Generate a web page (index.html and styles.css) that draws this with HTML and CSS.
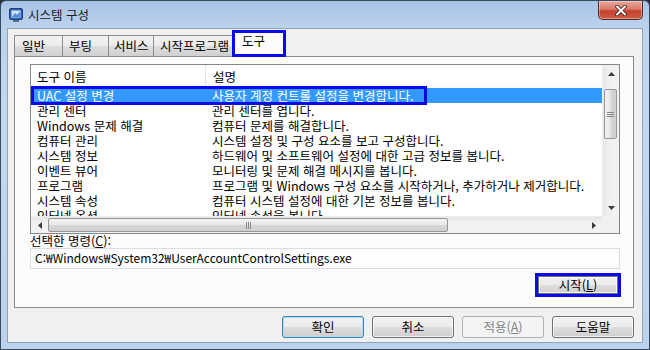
FILE: index.html
```html
<!DOCTYPE html>
<html lang="ko">
<head>
<meta charset="utf-8">
<title>시스템 구성</title>
<link rel="stylesheet" href="styles.css">
</head>
<body>
<div class="window">
  <div class="titlebar">
    <svg class="app-icon" width="14" height="14" viewBox="0 0 14 14">
      <rect x="0.5" y="0.5" width="13" height="11" rx="1.5" fill="#2f64b8" stroke="#1d3f7a"/>
      <rect x="2.5" y="2.5" width="9" height="7" fill="#cfe3fb"/>
      <path d="M3 9 L6 5 L8 7 L11 3.5 L11 9 Z" fill="#4f8ee0"/>
      <rect x="4" y="12" width="6" height="2" fill="#5a6f8c"/>
    </svg>
    <span class="title">시스템 구성</span>
    <div class="close">
      <svg width="14" height="11" viewBox="0 0 14 11">
        <path d="M3 1.5 L11 9.5 M11 1.5 L3 9.5" stroke="#4a1a12" stroke-width="3.6" stroke-linecap="round"/>
        <path d="M3 1.5 L11 9.5 M11 1.5 L3 9.5" stroke="#ffffff" stroke-width="2" stroke-linecap="round"/>
      </svg>
    </div>
  </div>
  <div class="client">
    <div class="tabs">
      <div class="tab tab-general">일반</div>
      <div class="tab tab-boot">부팅</div>
      <div class="tab tab-services">서비스</div>
      <div class="tab tab-startup">시작프로그램</div>
      <div class="tab tab-active">도구</div>
    </div>
    <div class="panel">
      <div class="listbox">
        <div class="list-content">
          <div class="list-header">
            <div class="col1">도구 이름</div>
            <div class="col2">설명</div>
          </div>
          <div class="row selected"><div class="col1">UAC 설정 변경</div><div class="col2">사용자 계정 컨트롤 설정을 변경합니다.</div></div>
          <div class="row"><div class="col1">관리 센터</div><div class="col2">관리 센터를 엽니다.</div></div>
          <div class="row"><div class="col1">Windows 문제 해결</div><div class="col2">컴퓨터 문제를 해결합니다.</div></div>
          <div class="row"><div class="col1">컴퓨터 관리</div><div class="col2">시스템 설정 및 구성 요소를 보고 구성합니다.</div></div>
          <div class="row"><div class="col1">시스템 정보</div><div class="col2">하드웨어 및 소프트웨어 설정에 대한 고급 정보를 봅니다.</div></div>
          <div class="row"><div class="col1">이벤트 뷰어</div><div class="col2">모니터링 및 문제 해결 메시지를 봅니다.</div></div>
          <div class="row"><div class="col1">프로그램</div><div class="col2">프로그램 및 Windows 구성 요소를 시작하거나, 추가하거나 제거합니다.</div></div>
          <div class="row"><div class="col1">시스템 속성</div><div class="col2">컴퓨터 시스템 설정에 대한 기본 정보를 봅니다.</div></div>
          <div class="row"><div class="col1">인터넷 옵션</div><div class="col2">인터넷 속성을 봅니다.</div></div>
        </div>
        <div class="vscroll">
          <div class="sb-btn">
            <svg width="7" height="4" viewBox="0 0 7 4"><path d="M0 4 L3.5 0 L7 4 Z" fill="#3a3a3a"/></svg>
          </div>
          <div class="v-track">
            <div class="v-thumb">
              <svg width="7" height="7" viewBox="0 0 7 7"><path d="M0 1.5 H7 M0 3.5 H7 M0 5.5 H7" stroke="#8a8a8a" stroke-width="1"/></svg>
            </div>
          </div>
          <div class="sb-btn">
            <svg width="7" height="4" viewBox="0 0 7 4"><path d="M0 0 L3.5 4 L7 0 Z" fill="#3a3a3a"/></svg>
          </div>
        </div>
        <div class="hscroll">
          <div class="sb-btn">
            <svg width="4" height="7" viewBox="0 0 4 7"><path d="M4 0 L0 3.5 L4 7 Z" fill="#3a3a3a"/></svg>
          </div>
          <div class="h-track">
            <div class="h-thumb">
              <svg width="7" height="7" viewBox="0 0 7 7"><path d="M1.5 0 V7 M3.5 0 V7 M5.5 0 V7" stroke="#8a8a8a" stroke-width="1"/></svg>
            </div>
          </div>
          <div class="sb-btn">
            <svg width="4" height="7" viewBox="0 0 4 7"><path d="M0 0 L4 3.5 L0 7 Z" fill="#3a3a3a"/></svg>
          </div>
        </div>
        <div class="corner"></div>
        <div class="mark-row"></div>
      </div>
      <div class="cmd-label">선택한 명령(<u>C</u>):</div>
      <div class="cmd-field">C:₩Windows₩System32₩UserAccountControlSettings.exe</div>
      <div class="run-row">
        <button class="btn btn-run">시작(<u>L</u>)</button>
      </div>
    </div>
    <div class="buttons">
      <button class="btn btn-default">확인</button>
      <button class="btn">취소</button>
      <button class="btn btn-disabled">적용(<u>A</u>)</button>
      <button class="btn">도움말</button>
    </div>
  </div>
</div>
</body>
</html>
```

FILE: styles.css
```css
html, body {
  margin: 0;
  padding: 0;
}

body {
  width: 650px;
  height: 350px;
  overflow: hidden;
  background: #2a2f38;
  font-family: "Noto Sans CJK KR", "Liberation Sans", sans-serif;
  font-size: 12.5px;
  color: #000;
}

.window {
  box-sizing: border-box;
  width: 650px;
  height: 350px;
  border: 1px solid #3a4a5e;
  border-radius: 6px 6px 0 0;
  background: linear-gradient(180deg, #a7c3e5 0px, #bcd3ee 28px, #c4d8ef 120px, #bcd2ec 100%);
  padding: 0 6px 6px 6px;
  display: flex;
  flex-direction: column;
}

.titlebar {
  height: 27px;
  display: flex;
  align-items: center;
}

.app-icon {
  margin-left: 2px;
  margin-top: 1px;
  flex: none;
}

.title {
  margin-left: 5px;
  font-size: 12.5px;
  color: #1b1b1b;
  line-height: 14px;
}

.close {
  margin-left: auto;
  align-self: flex-start;
  width: 45px;
  height: 19px;
  box-sizing: border-box;
  border: 1px solid #5b2b24;
  border-top: none;
  border-radius: 0 0 5px 5px;
  background: linear-gradient(180deg, #e9a99c 0%, #d8796a 45%, #c4412f 55%, #cf5b45 100%);
  box-shadow: inset 0 0 0 1px rgba(255, 255, 255, 0.35);
  display: flex;
  align-items: center;
  justify-content: center;
}

.client {
  flex: 1;
  border: 1px solid #8fa3bc;
  background: #f0f0f0;
  padding: 2px 8px 0 6px;
  display: flex;
  flex-direction: column;
}

/* tabs */
.tabs {
  height: 25px;
  display: flex;
  align-items: flex-end;
  position: relative;
  z-index: 2;
}

.tab {
  box-sizing: border-box;
  height: 21px;
  border: 1px solid #898c95;
  border-bottom: none;
  margin-left: -1px;
  padding-left: 6px;
  line-height: 19px;
  white-space: nowrap;
  background: linear-gradient(180deg, #f2f2f2 0%, #ebebeb 50%, #dddddd 51%, #d0d0d0 100%);
}

.tab-general { margin-left: 0; width: 49px; padding-left: 7px; }
.tab-boot { width: 47px; }
.tab-services { width: 46px; padding-left: 5px; }
.tab-startup { width: 80px; }

.tab-active {
  margin-left: -1px;
  margin-bottom: -1px;
  width: 54px;
  height: 27px;
  border: 3px solid #0a0ae8;
  padding-left: 7px;
  line-height: 15px;
  background: #fcfcfc;
}

.panel {
  box-sizing: border-box;
  height: 252px;
  border: 1px solid #898c95;
  background: #fcfcfc;
  padding: 7px 13px 0 15px;
  display: flex;
  flex-direction: column;
}

/* list view */
.listbox {
  position: relative;
  box-sizing: border-box;
  width: 590px;
  height: 170px;
  border: 1px solid #828790;
  background: #fff;
  display: grid;
  grid-template-columns: 1fr 17px;
  grid-template-rows: 1fr 17px;
}

.list-content {
  overflow: hidden;
  grid-column: 1;
  grid-row: 1;
}

.list-header {
  display: flex;
  height: 23px;
  line-height: 23px;
  background: linear-gradient(180deg, #ffffff 0%, #ffffff 60%, #f7f8f9 100%);
}

.list-header .col1 {
  border-right: 1px solid #e3e7ec;
  width: 168px;
}

.col1 {
  box-sizing: content-box;
  width: 168px;
  padding-left: 6px;
  flex: none;
  white-space: nowrap;
}

.col2 {
  padding-left: 7px;
  white-space: nowrap;
}

.row {
  display: flex;
  height: 15px;
  line-height: 15px;
}

.row.selected {
  background: #3399ff;
  color: #fff;
  margin-left: 1px;
}

.row.selected .col1 {
  padding-left: 5px;
}

.mark-row {
  position: absolute;
  left: 0;
  top: 21px;
  width: 396px;
  height: 19px;
  box-sizing: border-box;
  border: 3px solid #0a0ae8;
  pointer-events: none;
}

/* scrollbars */
.vscroll {
  grid-column: 2;
  grid-row: 1;
  display: flex;
  flex-direction: column;
  background: linear-gradient(90deg, #e6e6e6 0%, #f1f1f1 40%, #f3f3f3 100%);
  border-left: 1px solid #eeeeee;
}

.hscroll {
  grid-column: 1;
  grid-row: 2;
  display: flex;
  background: linear-gradient(180deg, #e6e6e6 0%, #f1f1f1 40%, #f3f3f3 100%);
  border-top: 1px solid #eeeeee;
}

.sb-btn {
  flex: none;
  width: 17px;
  height: 17px;
  display: flex;
  align-items: center;
  justify-content: center;
}

.vscroll .sb-btn {
  width: 16px;
}

.hscroll .sb-btn {
  height: 16px;
}

.v-track {
  flex: 1;
  padding-top: 7px;
}

.v-thumb {
  box-sizing: border-box;
  width: 13px;
  height: 50px;
  margin-left: 1px;
  border: 1px solid #979797;
  border-radius: 2px;
  background: linear-gradient(90deg, #f3f3f3 0%, #e8e8e8 45%, #d6d6d6 55%, #cfcfcf 100%);
  display: flex;
  align-items: center;
  justify-content: center;
}

.h-track {
  flex: 1;
  padding-top: 1px;
}

.h-thumb {
  box-sizing: border-box;
  width: 400px;
  height: 14px;
  border: 1px solid #979797;
  border-radius: 2px;
  background: linear-gradient(180deg, #f3f3f3 0%, #e8e8e8 45%, #d6d6d6 55%, #cfcfcf 100%);
  display: flex;
  align-items: center;
  justify-content: center;
}

.corner {
  grid-column: 2;
  grid-row: 2;
  background: #f0f0f0;
}

/* command */
.cmd-label {
  height: 14px;
  line-height: 14px;
  margin-top: 0;
}

.cmd-field {
  box-sizing: border-box;
  width: 590px;
  height: 21px;
  border: 1px solid #dadde2;
  background: #fdfdfd;
  padding-left: 4px;
  line-height: 18px;
  font-size: 12px;
  white-space: nowrap;
}

.run-row {
  display: flex;
  justify-content: flex-end;
  margin-top: 4px;
  margin-right: -1px;
}

/* buttons */
.btn {
  box-sizing: border-box;
  font-family: inherit;
  font-size: 12.5px;
  color: #000;
  width: 82px;
  height: 22px;
  padding: 0;
  border: 1px solid #707070;
  border-radius: 3px;
  background: linear-gradient(180deg, #f2f2f2 0%, #ebebeb 48%, #dddddd 52%, #cfcfcf 100%);
  box-shadow: inset 0 0 0 1px rgba(255, 255, 255, 0.7);
  line-height: 18px;
  text-align: center;
}

.btn-run {
  width: 86px;
  height: 24px;
  border: 3px solid #0a0ae8;
  border-radius: 0;
  box-shadow: inset 0 0 0 1px #707070, inset 0 0 0 2px rgba(255, 255, 255, 0.7);
}

.buttons {
  display: flex;
  justify-content: flex-end;
  gap: 8px;
  margin-top: 8px;
}

.btn-default {
  border-color: #3c7fb1;
  box-shadow: inset 0 0 0 1px #a8dff8;
}

.btn-disabled {
  border-color: #adb2b5;
  background: #f4f4f4;
  color: #838383;
  box-shadow: none;
}
```
